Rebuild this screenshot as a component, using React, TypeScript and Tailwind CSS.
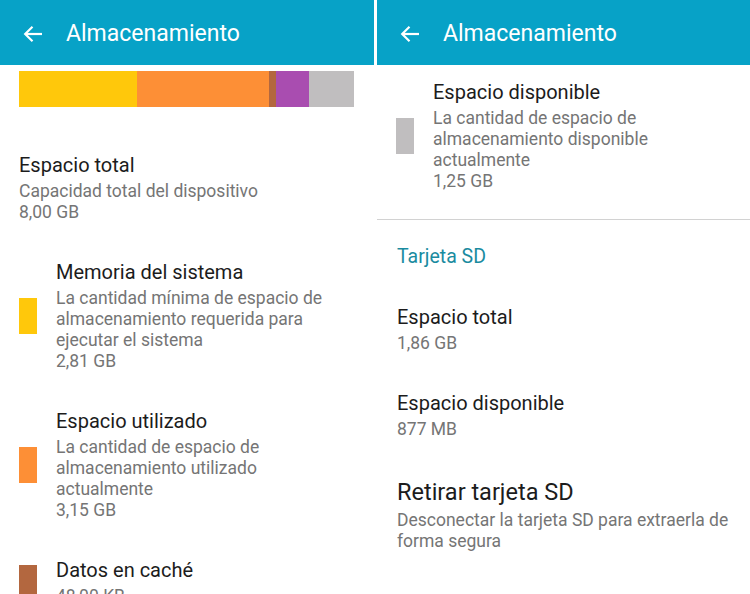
import type { ReactNode } from "react";

const font = { fontFamily: "Roboto, 'Noto Sans', sans-serif" };

const BackArrow = () => (
  <svg width="20" height="18" viewBox="0 0 20 18" fill="none" className="shrink-0">
    <path d="M19 9H2.5" stroke="white" strokeWidth="2.2" />
    <path d="M9.5 1.8 2.2 9l7.3 7.2" stroke="white" strokeWidth="2.2" />
  </svg>
);

const Header = () => (
  <header className="flex h-[65px] items-center bg-[#07a2c7] pl-[23px] pt-[2px]">
    <BackArrow />
    <h1 className="ml-[23px] text-[23px] leading-none text-white">Almacenamiento</h1>
  </header>
);

interface ItemProps {
  title: string;
  lines: string[];
  className?: string;
  titleSize?: string;
}

const Item = ({ title, lines, className = "", titleSize = "text-[20px] leading-[24px]" }: ItemProps) => (
  <div className={className}>
    <p className={`${titleSize} text-[#1c1c1c]`}>{title}</p>
    <div className="mt-[4px] text-[17.5px] leading-[21px] text-[#757575]">
      {lines.map((l) => (
        <p key={l}>{l}</p>
      ))}
    </div>
  </div>
);

const SwatchItem = ({ color, children, className = "" }: { color: string; children: ReactNode; className?: string }) => (
  <div className={`flex items-center ${className}`}>
    <div className={`h-[36px] w-[18px] shrink-0 ${color}`} />
    <div className="ml-[19px]">{children}</div>
  </div>
);

const LeftScreen = () => (
  <section className="h-[594px] w-[374px] shrink-0 overflow-hidden bg-white">
    <Header />
    <div className="mx-[19px] mt-[6px] flex h-[36px] w-[335px]">
      <div className="w-[118px] bg-[#ffc80b]" />
      <div className="w-[132px] bg-[#fd8f36]" />
      <div className="w-[7px] bg-[#b3673f]" />
      <div className="w-[33px] bg-[#a94db0]" />
      <div className="w-[45px] bg-[#c0bebf]" />
    </div>

    <Item
      className="ml-[19px] mt-[46px]"
      title="Espacio total"
      lines={["Capacidad total del dispositivo", "8,00 GB"]}
    />

    <SwatchItem color="bg-[#ffc80b]" className="ml-[19px] mt-[37px]">
      <Item
        title="Memoria del sistema"
        lines={[
          "La cantidad mínima de espacio de",
          "almacenamiento requerida para",
          "ejecutar el sistema",
          "2,81 GB",
        ]}
      />
    </SwatchItem>

    <SwatchItem color="bg-[#fd8f36]" className="ml-[19px] mt-[37px]">
      <Item
        title="Espacio utilizado"
        lines={[
          "La cantidad de espacio de",
          "almacenamiento utilizado",
          "actualmente",
          "3,15 GB",
        ]}
      />
    </SwatchItem>

    <SwatchItem color="bg-[#b3673f]" className="ml-[19px] mt-[37px]">
      <Item title="Datos en caché" lines={["48,00 KB"]} />
    </SwatchItem>
  </section>
);

const RightScreen = () => (
  <section className="h-[594px] w-[373px] shrink-0 overflow-hidden bg-white">
    <Header />
    <SwatchItem color="bg-[#c0bebf]" className="ml-[19px] mt-[15px]">
      <Item
        title="Espacio disponible"
        lines={[
          "La cantidad de espacio de",
          "almacenamiento disponible",
          "actualmente",
          "1,25 GB",
        ]}
      />
    </SwatchItem>

    <div className="mt-[27px] h-px bg-[#d2d2d2]" />

    <p className="ml-[20px] mt-[26px] text-[19.5px] leading-[22px] text-[#1a8ba0]">Tarjeta SD</p>

    <Item className="ml-[20px] mt-[37px]" title="Espacio total" lines={["1,86 GB"]} />
    <Item className="ml-[20px] mt-[37px]" title="Espacio disponible" lines={["877 MB"]} />
    <Item
      className="ml-[20px] mt-[39px]"
      titleSize="text-[23.5px] leading-[27px]"
      title="Retirar tarjeta SD"
      lines={["Desconectar la tarjeta SD para extraerla de", "forma segura"]}
    />
  </section>
);

export default function App() {
  return (
    <div className="flex h-[594px] w-[750px] gap-[3px] overflow-hidden bg-white" style={font}>
      <LeftScreen />
      <RightScreen />
    </div>
  );
}
